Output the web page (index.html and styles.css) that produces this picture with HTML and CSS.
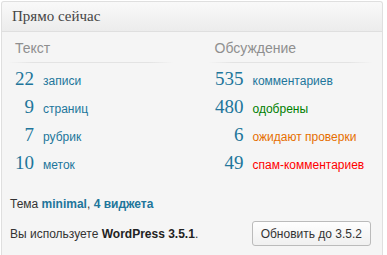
FILE: index.html
```html
<!DOCTYPE html>
<html lang="ru">
<head>
    <meta charset="UTF-8">
    <title>Прямо сейчас</title>
    <link rel="stylesheet" href="styles.css">
</head>
<body>
    <div class="postbox">
        <h3 class="hndle">Прямо сейчас</h3>
        <div class="inside">
            <div class="tables">
                <div class="table">
                    <p class="sub">Текст</p>
                    <div class="row"><span class="b">22</span><span class="t">записи</span></div>
                    <div class="row"><span class="b">9</span><span class="t">страниц</span></div>
                    <div class="row"><span class="b">7</span><span class="t">рубрик</span></div>
                    <div class="row"><span class="b">10</span><span class="t">меток</span></div>
                </div>
                <div class="table discussion">
                    <p class="sub">Обсуждение</p>
                    <div class="row"><span class="b">535</span><span class="t">комментариев</span></div>
                    <div class="row"><span class="b">480</span><span class="t approved">одобрены</span></div>
                    <div class="row"><span class="b">6</span><span class="t waiting">ожидают проверки</span></div>
                    <div class="row"><span class="b">49</span><span class="t spam">спам-комментариев</span></div>
                </div>
            </div>
            <p class="theme">Тема <a href="#">minimal</a>, <a href="#">4 виджета</a></p>
            <div class="versions">
                <span>Вы используете <b>WordPress 3.5.1</b>.</span>
                <a class="button" href="#">Обновить до 3.5.2</a>
            </div>
        </div>
    </div>
</body>
</html>
```

FILE: styles.css
```css
body {
    margin: 0;
    background: #fff;
    font-family: "Liberation Sans", Arial, sans-serif;
    font-size: 12px;
    color: #333;
}

.postbox {
    width: 382px;
    margin: 1px 0 0 1px;
    border: 1px solid #dfdfdf;
    border-bottom: none;
    border-radius: 3px 3px 0 0;
    background: #f5f5f5;
    height: 254px;
    box-sizing: border-box;
}

.hndle {
    margin: 0;
    height: 29px;
    line-height: 29px;
    padding: 0 10px;
    font-family: "Liberation Serif", "Times New Roman", serif;
    font-weight: normal;
    font-size: 15px;
    color: #464646;
    background: linear-gradient(to bottom, #f9f9f9, #ececec);
    border-bottom: 1px solid #dfdfdf;
    border-radius: 3px 3px 0 0;
}

.inside {
    padding: 0 10px 0 7px;
}

.tables {
    display: flex;
    gap: 36px;
}

.table {
    width: 164px;
}

.sub {
    margin: 0 0 5px;
    padding: 8px 0 0 6px;
    height: 22px;
    font-size: 14px;
    color: #8f8f8f;
    border-bottom: 1px solid;
    border-image: linear-gradient(to right, #f5f5f5, #e3e3e3 15%, #e3e3e3 85%, #f5f5f5) 1;
}

.row {
    display: flex;
    align-items: baseline;
    height: 28px;
}

.b {
    width: 25px;
    text-align: right;
    font-family: "Liberation Serif", Georgia, serif;
    font-size: 19px;
    color: #21759b;
}

.discussion .b {
    width: 35px;
}

.t {
    margin-left: 9px;
    color: #21759b;
}

.t.approved { color: #008000; }
.t.waiting { color: #e66f00; }
.t.spam { color: #ff0000; }

.theme {
    margin: 17px 0 0 1px;
}

.theme a {
    color: #21759b;
    font-weight: bold;
    text-decoration: none;
}

.versions {
    display: flex;
    justify-content: space-between;
    align-items: center;
    margin: 10px 0 0 1px;
}

.versions b {
    color: #222;
}

.button {
    margin-right: 1px;
    padding: 5px 8px 4px;
    border: 1px solid #bbb;
    border-radius: 3px;
    background: linear-gradient(to bottom, #fefefe, #f0f0f0);
    color: #333;
    text-decoration: none;
    font-size: 12px;
}
```
